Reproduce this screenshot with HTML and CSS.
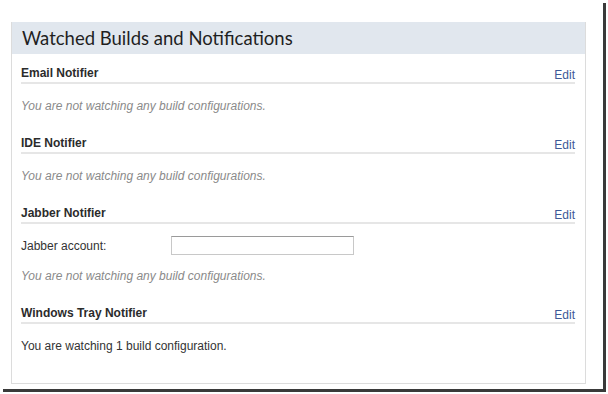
FILE: index.html
```html
<!DOCTYPE html>
<html>
<head>
<meta charset="utf-8">
<link rel="stylesheet" href="styles.css">
</head>
<body>
<div class="frame">
  <div class="panel">
    <div class="panel-header"><h1 class="title">Watched Builds and Notifications</h1></div>
    <div class="panel-body">
      <div class="section">
        <div class="section-head"><span class="section-title">Email Notifier</span><a class="edit" href="#">Edit</a></div>
        <p class="note">You are not watching any build configurations.</p>
      </div>
      <div class="section">
        <div class="section-head"><span class="section-title">IDE Notifier</span><a class="edit" href="#">Edit</a></div>
        <p class="note">You are not watching any build configurations.</p>
      </div>
      <div class="section">
        <div class="section-head"><span class="section-title">Jabber Notifier</span><a class="edit" href="#">Edit</a></div>
        <div class="field-row"><label class="field-label">Jabber account:</label><input class="field-input" type="text"></div>
        <p class="note">You are not watching any build configurations.</p>
      </div>
      <div class="section last">
        <div class="section-head"><span class="section-title">Windows Tray Notifier</span><a class="edit" href="#">Edit</a></div>
        <p class="info">You are watching 1 build configuration.</p>
      </div>
    </div>
  </div>
</div>
</body>
</html>
```
FILE: styles.css
```css
html, body {
  margin: 0;
  padding: 0;
  background: #ffffff;
}
body {
  height: 394px;
  overflow: hidden;
}
.frame {
  box-sizing: border-box;
  width: 603px;
  height: 389px;
  padding: 22px 0 0 11px;
  background: #ffffff;
  box-shadow: 3px 3px 0 #3a3a3a;
  font-family: "Liberation Sans", Arial, sans-serif;
  font-size: 12px;
  color: #333333;
}
.panel {
  box-sizing: border-box;
  width: 575px;
  border: 1px solid #dcdcdc;
  border-top: none;
}
.panel-header {
  height: 32px;
  background: #e1e7ee;
  display: flex;
  align-items: center;
  padding-left: 10px;
}
.title {
  margin: 0;
  font-family: "Lato", sans-serif;
  font-weight: normal;
  font-size: 18.5px;
  color: #1f1f1f;
  line-height: 22px;
}
.panel-body {
  padding: 10px 10px 29px 9px;
}
.section {
  padding-bottom: 20px;
}
.section.last {
  padding-bottom: 0;
}
.section-head {
  display: flex;
  justify-content: space-between;
  align-items: flex-end;
  height: 18px;
  border-bottom: 2px solid #e6e6e6;
}
.section-title {
  font-weight: bold;
  font-size: 12px;
  line-height: 18px;
  color: #2b2b2b;
}
.edit {
  color: #3d5a98;
  text-decoration: none;
  font-size: 12px;
  line-height: 16px;
  margin-bottom: -1px;
}
.note {
  margin: 14px 0 0;
  line-height: 16px;
  font-style: italic;
  color: #8a8a8a;
}
.info {
  margin: 14px 0 0;
  line-height: 16px;
  color: #333333;
}
.field-row {
  display: flex;
  align-items: center;
  margin-top: 12px;
  height: 19px;
}
.field-label {
  width: 150px;
  line-height: 16px;
}
.field-input {
  box-sizing: border-box;
  width: 183px;
  height: 19px;
  margin: 0;
  padding: 0;
  border: 1px solid #c8c8c8;
  border-top-color: #9a9a9a;
  background: #ffffff;
}
.field-row + .note {
  margin-top: 13px;
}
```
